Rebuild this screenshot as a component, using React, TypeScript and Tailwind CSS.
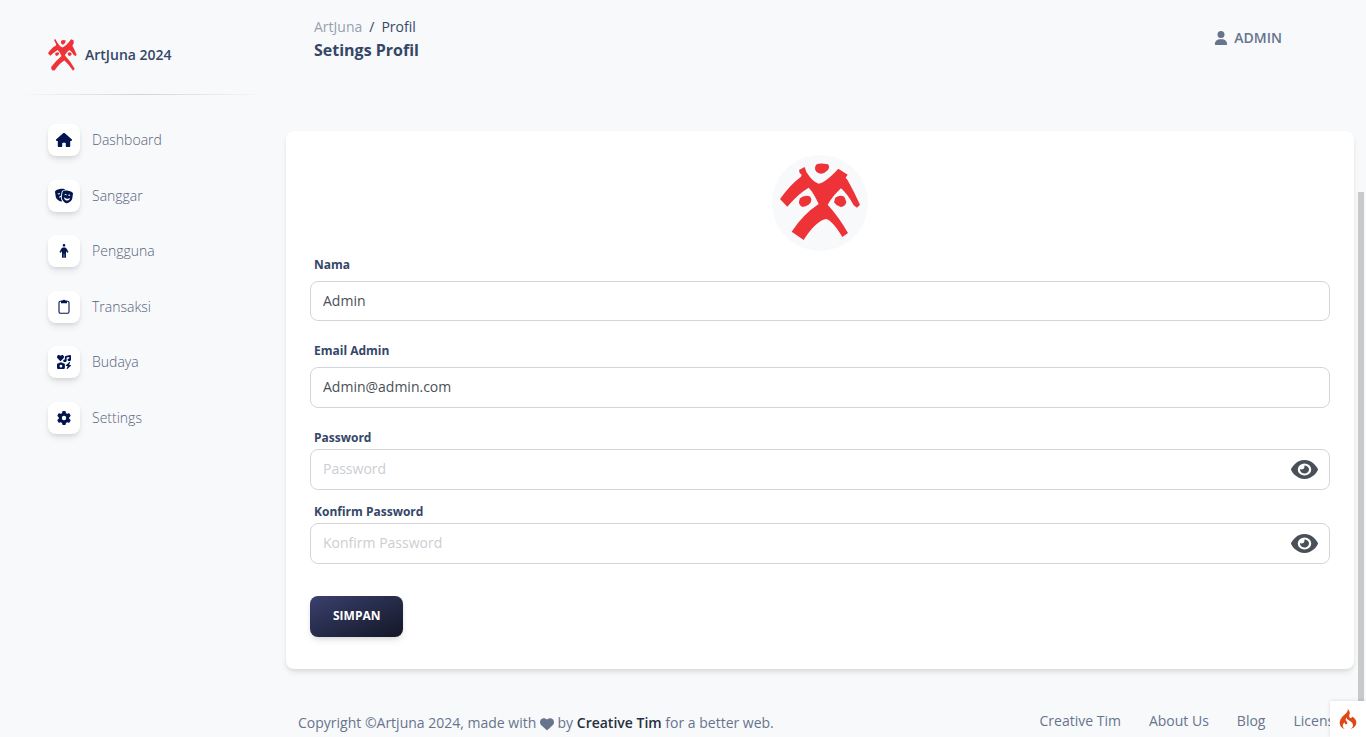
import type { ReactNode } from 'react';
import {
  FaEye,
  FaGear,
  FaHeart,
  FaHouse,
  FaIcons,
  FaMasksTheater,
  FaPerson,
  FaUser,
} from 'react-icons/fa6';
import { SiCodeigniter } from 'react-icons/si';

function Logo({ className }: { className: string }) {
  return (
    <svg
      className={className}
      viewBox="60 52 240 231"
      preserveAspectRatio="none"
      fill="#ee3338"
      aria-hidden="true"
    >
      <path
        fillRule="evenodd"
        d="M117 73L134 64L139 79Q159 110 176 114Q195 112 235 69L263 87L257 96L263 104Q281 136 300 177L291 186L281 179Q263 145 243 128Q218 151 203 177Q237 214 264 262L247 274Q217 224 198 220Q167 226 131 283L95 258Q129 206 176 175Q160 140 146 126Q116 143 82 183L60 160Q91 116 123 93L125 87L119 82Z"
      />
      <path d="M171 55Q183 52 204 56Q211 64 203 74Q193 85 181 84Q164 79 165 67Q165 60 171 55Z" />
      <path d="M120 158Q132 147 149 152Q158 161 151 172Q139 185 125 183Q114 175 118 164Z" />
      <path d="M226 156Q239 147 253 153L259 168Q257 182 242 184Q229 181 222 170Z" />
    </svg>
  );
}

function LogoMark({ className }: { className: string }) {
  return (
    <svg className={className} viewBox="84 60 88 96" fill="#ee3338" aria-hidden="true">
      <path d="M102 62L107 60L112 70Q119 82 128 85Q140 80 154 60L162 64V72L158 80Q165 92 171 108L167 111L162 108Q156 97 149 93Q139 100 135 109Q154 129 165 150L160 156Q148 138 134 125Q120 132 104 155L96 154L93 145Q106 127 125 111Q120 98 113 93Q103 100 91 110L84 103Q91 89 107 80L109 76Z" />
      <path d="M124 65Q130 60 138 64Q137 74 130 77Q121 76 124 65Z" />
      <path d="M106 103Q112 98 118 101Q118 109 110 111Q104 109 106 103Z" />
      <path d="M144 102Q150 98 155 102Q157 109 150 111Q143 110 144 102Z" />
    </svg>
  );
}

function ClipboardIcon() {
  return (
    <svg width="12" height="15" viewBox="0 0 12 15" fill="none" aria-hidden="true">
      <rect x="1" y="2.2" width="10" height="12" rx="1.4" stroke="currentColor" strokeWidth="1.1" />
      <path d="M3 1.8h1.4a1.7 1.7 0 0 1 3.2 0H9v2.4H3z" fill="currentColor" />
    </svg>
  );
}

const menu: { label: string; icon: ReactNode }[] = [
  { label: 'Dashboard', icon: <FaHouse size={16} /> },
  { label: 'Sanggar', icon: <FaMasksTheater size={18} /> },
  { label: 'Pengguna', icon: <FaPerson size={14} /> },
  { label: 'Transaksi', icon: <ClipboardIcon /> },
  { label: 'Budaya', icon: <FaIcons size={14} /> },
  { label: 'Settings', icon: <FaGear size={14} /> },
];

const inputClass =
  'block w-full rounded-lg border border-[#d2d6da] bg-white px-3 pb-0.5 text-sm text-[#495057] placeholder:text-[#cbced3] outline-none focus:border-[#35d1f5]';
const labelClass = 'ml-1 block text-xs leading-5 font-bold text-[#344767]';

function PasswordField({ id, label }: { id: string; label: string }) {
  return (
    <div>
      <label htmlFor={id} className={labelClass}>
        {label}
      </label>
      <div className="relative mt-px">
        <input id={id} type="password" placeholder={label} className={inputClass + ' h-[41px]'} />
        <button
          type="button"
          aria-label={'Tampilkan ' + label}
          className="absolute inset-y-0 right-3 flex items-center text-[#495057]"
        >
          <FaEye viewBox="0 32 576 448" preserveAspectRatio="none" width={27} height={19} className="h-[19px] w-[27px]" />
        </button>
      </div>
    </div>
  );
}

export default function App() {
  return (
    <div className="relative flex h-screen overflow-hidden bg-[#f8f9fa] font-['Open_Sans','Noto_Sans',sans-serif] text-sm text-[#67748e]">
      <aside className="w-[274px] shrink-0 pl-4">
        <a href="#" className="flex h-[94px] items-center gap-2 pt-4 pl-8 font-semibold text-[#344767]">
          <LogoMark className="h-8 w-[29px]" />
          ArtJuna 2024
        </a>
        <hr className="mr-2 h-px border-0 bg-linear-to-r from-transparent via-black/15 to-transparent" />
        <nav className="mt-[29px] flex h-[310px] flex-col justify-between pl-8">
          {menu.map((item) => (
            <a key={item.label} href="#" className="flex items-center gap-3 font-light text-[#56637e]">
              <span className="flex size-8 items-center justify-center rounded-lg bg-white text-[#02154f] shadow-[0_4px_7px_-1px_rgba(0,0,0,0.11),0_2px_4px_-1px_rgba(0,0,0,0.07)]">
                {item.icon}
              </span>
              {item.label}
            </a>
          ))}
        </nav>
      </aside>

      <main className="min-w-0 grow px-3">
        <header className="flex h-[131px] items-start justify-between pt-4 pr-[72px] pl-7">
          <div>
            <nav aria-label="breadcrumb" className="flex gap-[7px] leading-[22px] text-[#344767]">
              <a href="#" className="opacity-50">
                ArtJuna
              </a>
              <span>/</span>
              <span>Profil</span>
            </nav>
            <h1 className="text-base leading-6 font-bold text-[#344767]">Setings Profil</h1>
          </div>
          <a href="#" className="mt-3 flex items-center gap-1.5 font-semibold">
            <FaUser size={14} />
            ADMIN
          </a>
        </header>

        <form
          onSubmit={(e) => e.preventDefault()}
          className="rounded-lg bg-white px-6 pt-6 pb-8 shadow-[0_4px_6px_-1px_rgba(0,0,0,0.1),0_2px_4px_-1px_rgba(0,0,0,0.06)]"
        >
          <div className="mx-auto flex size-24 items-center justify-center rounded-full bg-[#f8f9fa] pb-1">
            <Logo className="h-[77px] w-20" />
          </div>
          <div className="mt-1">
            <label htmlFor="nama" className={labelClass}>
              Nama
            </label>
            <input id="nama" type="text" defaultValue="Admin" className={inputClass + ' mt-1.5 h-10'} />
          </div>
          <div className="mt-5">
            <label htmlFor="email" className={labelClass}>
              Email Admin
            </label>
            <input
              id="email"
              type="email"
              defaultValue="Admin@admin.com"
              className={inputClass + ' mt-1.5 h-[41px]'}
            />
          </div>
          <div className="mt-5 flex flex-col gap-3">
            <PasswordField id="password" label="Password" />
            <PasswordField id="confirm" label="Konfirm Password" />
          </div>
          <button
            type="submit"
            className="mt-8 h-[41px] rounded-lg bg-linear-to-br from-[#3a416f] to-[#141727] px-[23px] pb-0.5 text-xs font-bold text-white shadow-[0_4px_7px_-1px_rgba(0,0,0,0.11),0_2px_4px_-1px_rgba(0,0,0,0.07)]"
          >
            SIMPAN
          </button>
        </form>

        <footer className="flex items-start justify-between pt-10 pr-3 pl-3">
          <p className="mt-0.5 leading-6">
            Copyright ©Artjuna 2024, made with <FaHeart className="inline" size={14} /> by{' '}
            <a href="#" className="font-semibold text-[#252f40]">
              Creative Tim
            </a>{' '}
            for a better web.
          </p>
          <nav className="flex gap-7 leading-6">
            <a href="#">Creative Tim</a>
            <a href="#">About Us</a>
            <a href="#">Blog</a>
            <a href="#">License</a>
          </nav>
        </footer>
      </main>

      <div className="absolute right-0.5 bottom-0 h-[545px] w-1.5 bg-[#c8c9c9]" />
      <button
        type="button"
        aria-label="Debug"
        className="absolute right-0 bottom-0 flex h-9 w-9 items-center justify-center bg-white text-[#dd4814] shadow-[0_0_4px_rgba(0,0,0,0.12)]"
      >
        <SiCodeigniter size={20} />
      </button>
    </div>
  );
}
